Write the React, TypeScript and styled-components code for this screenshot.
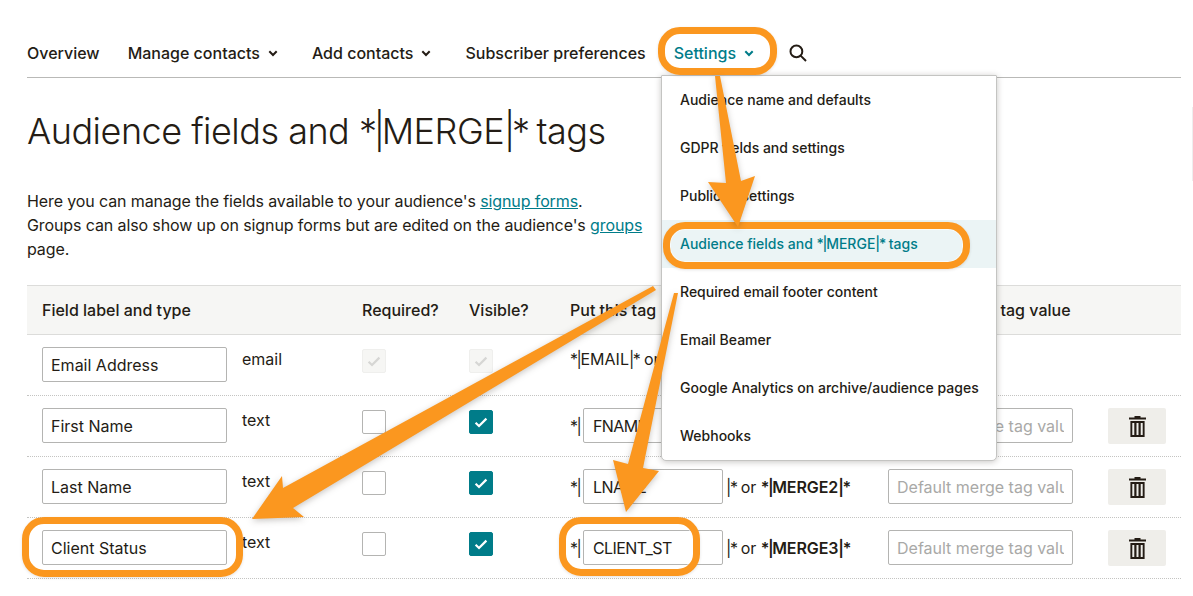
import React from "react"
import styled, { createGlobalStyle } from "styled-components"

const ink = "#241c15"
const teal = "#007c89"
const orange = "#fb971f"

const GlobalStyle = createGlobalStyle`
  html, body {
    margin: 0;
    padding: 0;
    background: #fff;
  }
  * {
    box-sizing: border-box;
  }
`

const Page = styled.div`
  position: relative;
  width: 1193px;
  height: 596px;
  overflow: hidden;
  padding: 0 12px 0 27px;
  color: ${ink};
  font-family: Inter, "Liberation Sans", sans-serif;
  font-size: 16px;
  line-height: 24px;
`

const Nav = styled.nav`
  display: flex;
  align-items: center;
  gap: 28px;
  height: 78px;
  padding-top: 29px;
  border-bottom: 1px solid #b9b9b7;
  & > svg {
    margin-left: 1px;
  }
`

const NavItem = styled.a<{ $active?: boolean }>`
  display: flex;
  align-items: center;
  font-weight: 500;
  white-space: nowrap;
  color: ${(p) => (p.$active ? teal : ink)};
`

const ChevronBox = styled.span`
  display: flex;
  align-items: center;
  justify-content: center;
  width: 24px;
  height: 24px;
  padding-left: 2px;
`

const Title = styled.h1`
  margin: 31px 0 0;
  font-size: 36px;
  line-height: 44px;
  font-weight: 300;
  letter-spacing: -0.5px;
  white-space: nowrap;
`

const Intro = styled.p`
  width: 625px;
  margin: 36px 0 24px;
  letter-spacing: -0.11px;
`

const TextLink = styled.a`
  color: ${teal};
  text-decoration: underline;
`

// Inter sets the pipe much wider than the face in the screenshot
const Tight = styled.span`
  letter-spacing: -0.09em;
`

const Grid = styled.div`
  display: grid;
  grid-template-columns: 335px 107px 101px 318px 220px 73px;
`

const HeadRow = styled(Grid)`
  height: 50px;
  align-items: center;
  background: #f6f6f4;
  border-top: 1px solid #dcdcda;
  border-bottom: 1px solid #dcdcda;
  font-weight: 500;
  white-space: nowrap;
`

const HeadCell = styled.div<{ $first?: boolean }>`
  padding-left: ${(p) => (p.$first ? "15px" : "0")};
`

const Row = styled(Grid)`
  height: 61px;
  padding-top: 12px;
  border-bottom: 1px dotted #c4c4c2;
`

const LabelCell = styled.div`
  display: flex;
  gap: 15px;
  padding-left: 15px;
`

const TypeText = styled.span`
  line-height: 24px;
`

const Field = styled.input<{ $width: number }>`
  width: ${(p) => p.$width}px;
  height: 35px;
  padding: 0 8px;
  border: 1px solid #b4b4b2;
  border-radius: 2px;
  background: #fff;
  color: ${ink};
  font: inherit;
  outline: none;
  &::placeholder {
    color: #a9a9a7;
    opacity: 1;
  }
`

const TagField = styled(Field)`
  padding: 0 9px;
  letter-spacing: -0.6px;
`

const CheckCell = styled.div`
  padding-top: 2px;
`

const Box = styled.span<{ $state: "off" | "on" | "locked" }>`
  display: flex;
  align-items: center;
  justify-content: center;
  width: 24px;
  height: 24px;
  border-radius: 2px;
  border: 1px solid
    ${(p) => (p.$state === "on" ? teal : p.$state === "locked" ? "#efefed" : "#b4b4b2")};
  background: ${(p) => (p.$state === "on" ? teal : p.$state === "locked" ? "#f6f6f4" : "#fff")};
`

const TagCell = styled.div`
  display: flex;
  align-items: center;
  height: 35px;
  white-space: nowrap;
`

const PlainTag = styled.span`
  align-self: flex-start;
`

const TagOpen = styled.span`
  width: 13px;
`

const TagClose = styled.span`
  margin-left: 3px;
  letter-spacing: -0.1px;
`

const TagName = styled.b`
  font-weight: 600;
`

const DeleteButton = styled.button`
  display: flex;
  align-items: center;
  justify-content: center;
  width: 58px;
  height: 36px;
  padding: 0;
  border: 0;
  border-radius: 2px;
  background: #efeeea;
`

const Menu = styled.ul`
  position: absolute;
  top: 75px;
  left: 661px;
  width: 336px;
  margin: 0;
  padding: 0;
  list-style: none;
  background: #fff;
  border: 1px solid #c4c4c2;
  border-radius: 1px 1px 5px 5px;
  box-shadow: 0 1px 6px rgba(36, 28, 21, 0.25);
`

const MenuItem = styled.li<{ $active?: boolean }>`
  display: flex;
  align-items: center;
  height: 48px;
  padding-left: 18px;
  font-size: 14px;
  font-weight: 500;
  white-space: pre;
  color: ${(p) => (p.$active ? teal : ink)};
  background: ${(p) => (p.$active ? "#ebf4f5" : "transparent")};
`

const Ring = styled.div<{ $x: number; $y: number; $w: number; $h: number }>`
  position: absolute;
  left: ${(p) => p.$x}px;
  top: ${(p) => p.$y}px;
  width: ${(p) => p.$w}px;
  height: ${(p) => p.$h}px;
  border: 7px solid ${orange};
  border-radius: 22px;
  box-shadow: 0 1px 3px rgba(36, 28, 21, 0.12), inset 0 0 0 1px rgba(255, 255, 255, 0.6);
`

const Arrows = styled.svg`
  position: absolute;
  left: 0;
  top: 0;
  filter: drop-shadow(0 2px 3px rgba(36, 28, 21, 0.25));
`

const EdgeMark = styled.div`
  position: absolute;
  right: 0;
  top: 107px;
  width: 1px;
  height: 74px;
  background: #eeeeee;
`

const Chevron = () => (
  <svg width="10" height="7" viewBox="0 0 10 7" fill="none" stroke="currentColor" strokeWidth="2">
    <path d="M1.3 1.2 5 5 8.7 1.2" />
  </svg>
)

const SearchIcon = () => (
  <svg width="18" height="18" viewBox="0 0 18 18" fill="none" stroke={ink} strokeWidth="2">
    <circle cx="7.4" cy="7.4" r="5.9" />
    <path d="M11.6 11.6 17 17" />
  </svg>
)

const Check = ({ color }: { color: string }) => (
  <svg width="14" height="11" viewBox="0 0 14 11" fill="none" stroke={color} strokeWidth="2.2">
    <path d="M1.6 5.8 5 9 12.4 1.6" />
  </svg>
)

const TrashIcon = () => (
  <svg width="17" height="21" viewBox="0 0 17 21" fill={ink}>
    <path d="M5.5 0h6v1.6h5.5v2H0v-2h5.5z" />
    <path d="M1.4 5H15.6v16H1.4zM3.3 7v12h2V7zm4.2 0v12h2V7zm4.2 0v12h2V7z" fillRule="evenodd" />
  </svg>
)

// wraps the *| and |* markers of a merge tag so they close up
const mergeText = (text: string) =>
  text.split(/(\*\||\|\*)/).map((part, i) => (i % 2 ? <Tight key={i}>{part}</Tight> : part))

const menuItems = [
  "Audience name and defaults",
  "GDPR fields and settings",
  "Publicity settings",
  "Audience fields and *|MERGE|* tags",
  "Required email footer content",
  "Email Beamer",
  "Google Analytics on archive/audience pages",
  "Webhooks",
]

const fields = [
  { label: "First Name", tag: "FNAME", merge: "*|MERGE1|*" },
  { label: "Last Name", tag: "LNAME", merge: "*|MERGE2|*" },
  { label: "Client Status", tag: "CLIENT_ST", merge: "*|MERGE3|*" },
]

const App: React.FC = () => {
  return (
    <Page>
      <GlobalStyle />
      <Nav>
        <NavItem>Overview</NavItem>
        <NavItem>
          Manage contacts
          <ChevronBox>
            <Chevron />
          </ChevronBox>
        </NavItem>
        <NavItem>
          Add contacts
          <ChevronBox>
            <Chevron />
          </ChevronBox>
        </NavItem>
        <NavItem>Subscriber preferences</NavItem>
        <NavItem $active>
          Settings
          <ChevronBox>
            <Chevron />
          </ChevronBox>
        </NavItem>
        <SearchIcon />
      </Nav>

      <Title>{mergeText("Audience fields and *|MERGE|* tags")}</Title>
      <Intro>
        Here you can manage the fields available to your audience's <TextLink>signup forms</TextLink>.
        <br />
        Groups can also show up on signup forms but are edited on the audience's <TextLink>groups</TextLink> page.
      </Intro>

      <HeadRow>
        <HeadCell $first>Field label and type</HeadCell>
        <HeadCell>Required?</HeadCell>
        <HeadCell>Visible?</HeadCell>
        <HeadCell>Put this tag in your content:</HeadCell>
        <HeadCell>Default merge tag value</HeadCell>
      </HeadRow>

      <Row>
        <LabelCell>
          <Field $width={185} defaultValue="Email Address" readOnly />
          <TypeText>email</TypeText>
        </LabelCell>
        <CheckCell>
          <Box $state="locked">
            <Check color="#d6d6d4" />
          </Box>
        </CheckCell>
        <CheckCell>
          <Box $state="locked">
            <Check color="#d6d6d4" />
          </Box>
        </CheckCell>
        <TagCell>
          <PlainTag>{mergeText("*|EMAIL|* or *|MERGE0|*")}</PlainTag>
        </TagCell>
      </Row>

      {fields.map((f) => (
        <Row key={f.tag}>
          <LabelCell>
            <Field $width={185} defaultValue={f.label} readOnly />
            <TypeText>text</TypeText>
          </LabelCell>
          <CheckCell>
            <Box $state="off" />
          </CheckCell>
          <CheckCell>
            <Box $state="on">
              <Check color="#fff" />
            </Box>
          </CheckCell>
          <TagCell>
            <TagOpen>
              <Tight>*|</Tight>
            </TagOpen>
            <TagField $width={140} defaultValue={f.tag} readOnly />
            <TagClose>
              <Tight>|*</Tight> or <TagName>{mergeText(f.merge)}</TagName>
            </TagClose>
          </TagCell>
          <div>
            <Field $width={185} placeholder="Default merge tag value" readOnly />
          </div>
          <DeleteButton>
            <TrashIcon />
          </DeleteButton>
        </Row>
      ))}

      <Menu>
        {menuItems.map((item) => (
          <MenuItem key={item} $active={item.startsWith("Audience fields")}>
            {mergeText(item)}
          </MenuItem>
        ))}
      </Menu>

      <EdgeMark />

      <Ring $x={658} $y={27} $w={119} $h={48} />
      <Ring $x={663} $y={222} $w={307} $h={47} />
      <Ring $x={22} $y={517} $w={221} $h={60} />
      <Ring $x={559} $y={517} $w={141} $h={59} />

      <Arrows width="1193" height="596" viewBox="0 0 1193 596" fill={orange}>
        <polygon points="715,76 720,76 741,181 755,176 738,227 708,182 726,183" />
        <polygon points="653,286 656,290 293,508 304,517 252,519 282,476 283,488" />
        <polygon points="674,293 678,293 643,468 659,471 626,512 613,460 628,464" />
      </Arrows>
    </Page>
  )
}

export default App
